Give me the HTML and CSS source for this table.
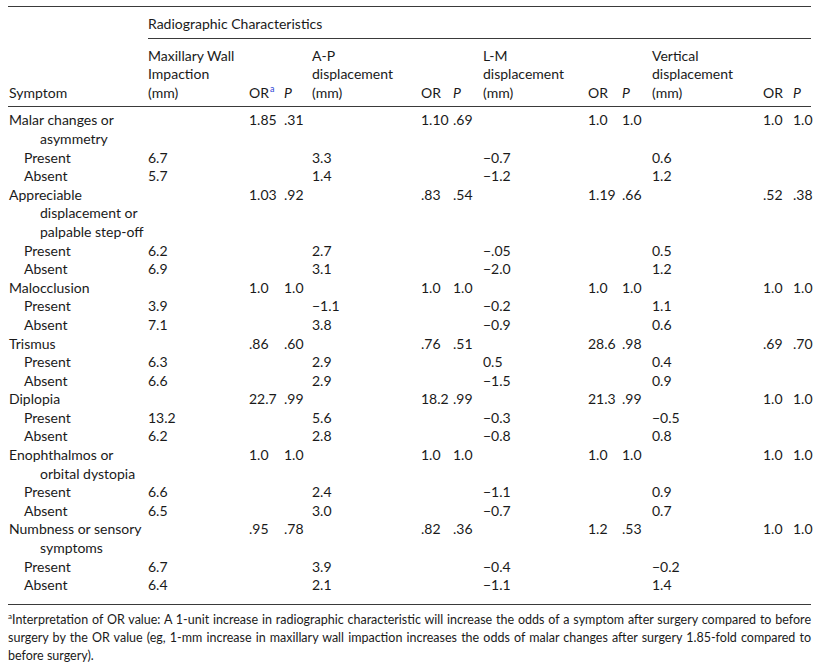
FILE: index.html
```html
<!DOCTYPE html>
<html lang="en">
<head>
<meta charset="utf-8">
<title>Radiographic Characteristics</title>
<link rel="stylesheet" href="styles.css">
</head>
<body>
<table class="data">
  <colgroup>
    <col class="c-sym"><col class="c-val"><col class="c-or"><col class="c-p">
    <col class="c-val2"><col class="c-or2"><col class="c-p2">
    <col class="c-val3"><col class="c-or3"><col class="c-p3">
    <col class="c-val4"><col class="c-or4"><col class="c-p4">
  </colgroup>
  <thead>
    <tr class="h1">
      <th class="blank"></th>
      <th colspan="12" class="group">Radiographic Characteristics</th>
    </tr>
    <tr class="h2">
      <th class="sym">Symptom</th>
      <th>Maxillary Wall<br>Impaction<br>(mm)</th>
      <th>OR<sup class="ref">a</sup></th>
      <th><i>P</i></th>
      <th>A-P<br>displacement<br>(mm)</th>
      <th>OR</th>
      <th><i>P</i></th>
      <th>L-M<br>displacement<br>(mm)</th>
      <th>OR</th>
      <th><i>P</i></th>
      <th>Vertical<br>displacement<br>(mm)</th>
      <th>OR</th>
      <th><i>P</i></th>
    </tr>
  </thead>
  <tbody>
    <tr class="first">
      <td class="sym">Malar changes or<br><span class="cont">asymmetry</span></td>
      <td></td><td>1.85</td><td>.31</td>
      <td></td><td>1.10</td><td>.69</td>
      <td></td><td>1.0</td><td>1.0</td>
      <td></td><td>1.0</td><td>1.0</td>
    </tr>
    <tr><td class="sub">Present</td><td>6.7</td><td></td><td></td><td>3.3</td><td></td><td></td><td>−0.7</td><td></td><td></td><td>0.6</td><td></td><td></td></tr>
    <tr><td class="sub">Absent</td><td>5.7</td><td></td><td></td><td>1.4</td><td></td><td></td><td>−1.2</td><td></td><td></td><td>1.2</td><td></td><td></td></tr>
    <tr>
      <td class="sym">Appreciable<br><span class="cont">displacement or</span><br><span class="cont">palpable step-off</span></td>
      <td></td><td>1.03</td><td>.92</td>
      <td></td><td>.83</td><td>.54</td>
      <td></td><td>1.19</td><td>.66</td>
      <td></td><td>.52</td><td>.38</td>
    </tr>
    <tr><td class="sub">Present</td><td>6.2</td><td></td><td></td><td>2.7</td><td></td><td></td><td>−.05</td><td></td><td></td><td>0.5</td><td></td><td></td></tr>
    <tr><td class="sub">Absent</td><td>6.9</td><td></td><td></td><td>3.1</td><td></td><td></td><td>−2.0</td><td></td><td></td><td>1.2</td><td></td><td></td></tr>
    <tr>
      <td class="sym">Malocclusion</td>
      <td></td><td>1.0</td><td>1.0</td>
      <td></td><td>1.0</td><td>1.0</td>
      <td></td><td>1.0</td><td>1.0</td>
      <td></td><td>1.0</td><td>1.0</td>
    </tr>
    <tr><td class="sub">Present</td><td>3.9</td><td></td><td></td><td>−1.1</td><td></td><td></td><td>−0.2</td><td></td><td></td><td>1.1</td><td></td><td></td></tr>
    <tr><td class="sub">Absent</td><td>7.1</td><td></td><td></td><td>3.8</td><td></td><td></td><td>−0.9</td><td></td><td></td><td>0.6</td><td></td><td></td></tr>
    <tr>
      <td class="sym">Trismus</td>
      <td></td><td>.86</td><td>.60</td>
      <td></td><td>.76</td><td>.51</td>
      <td></td><td>28.6</td><td>.98</td>
      <td></td><td>.69</td><td>.70</td>
    </tr>
    <tr><td class="sub">Present</td><td>6.3</td><td></td><td></td><td>2.9</td><td></td><td></td><td>0.5</td><td></td><td></td><td>0.4</td><td></td><td></td></tr>
    <tr><td class="sub">Absent</td><td>6.6</td><td></td><td></td><td>2.9</td><td></td><td></td><td>−1.5</td><td></td><td></td><td>0.9</td><td></td><td></td></tr>
    <tr>
      <td class="sym">Diplopia</td>
      <td></td><td>22.7</td><td>.99</td>
      <td></td><td>18.2</td><td>.99</td>
      <td></td><td>21.3</td><td>.99</td>
      <td></td><td>1.0</td><td>1.0</td>
    </tr>
    <tr><td class="sub">Present</td><td>13.2</td><td></td><td></td><td>5.6</td><td></td><td></td><td>−0.3</td><td></td><td></td><td>−0.5</td><td></td><td></td></tr>
    <tr><td class="sub">Absent</td><td>6.2</td><td></td><td></td><td>2.8</td><td></td><td></td><td>−0.8</td><td></td><td></td><td>0.8</td><td></td><td></td></tr>
    <tr>
      <td class="sym">Enophthalmos or<br><span class="cont">orbital dystopia</span></td>
      <td></td><td>1.0</td><td>1.0</td>
      <td></td><td>1.0</td><td>1.0</td>
      <td></td><td>1.0</td><td>1.0</td>
      <td></td><td>1.0</td><td>1.0</td>
    </tr>
    <tr><td class="sub">Present</td><td>6.6</td><td></td><td></td><td>2.4</td><td></td><td></td><td>−1.1</td><td></td><td></td><td>0.9</td><td></td><td></td></tr>
    <tr><td class="sub">Absent</td><td>6.5</td><td></td><td></td><td>3.0</td><td></td><td></td><td>−0.7</td><td></td><td></td><td>0.7</td><td></td><td></td></tr>
    <tr>
      <td class="sym">Numbness or sensory<br><span class="cont">symptoms</span></td>
      <td></td><td>.95</td><td>.78</td>
      <td></td><td>.82</td><td>.36</td>
      <td></td><td>1.2</td><td>.53</td>
      <td></td><td>1.0</td><td>1.0</td>
    </tr>
    <tr><td class="sub">Present</td><td>6.7</td><td></td><td></td><td>3.9</td><td></td><td></td><td>−0.4</td><td></td><td></td><td>−0.2</td><td></td><td></td></tr>
    <tr class="last"><td class="sub">Absent</td><td>6.4</td><td></td><td></td><td>2.1</td><td></td><td></td><td>−1.1</td><td></td><td></td><td>1.4</td><td></td><td></td></tr>
  </tbody>
</table>
<p class="note"><span class="line"><sup>a</sup>Interpretation of OR value: A 1-unit increase in radiographic characteristic will increase the odds of a symptom after surgery compared to before</span> <span class="line">surgery by the OR value (eg, 1-mm increase in maxillary wall impaction increases the odds of malar changes after surgery 1.85-fold compared to</span> <span class="line last-line">before surgery).</span></p>
</body>
</html>
```

FILE: styles.css
```css
html, body {
  margin: 0;
  padding: 0;
  background: #ffffff;
}

body {
  padding: 6px 7px 0 8px;
  font-family: Lato, "Open Sans", "DejaVu Sans", sans-serif;
  font-size: 14px;
  color: #1a1a1a;
}

.data {
  width: 803px;
  table-layout: fixed;
  border-collapse: separate;
  border-spacing: 0;
  border-top: 1px solid #3a3a3a;
  line-height: 18.6px;
}

.c-sym { width: 140px; }
.c-val { width: 101px; }
.c-or { width: 35px; }
.c-p { width: 28px; }
.c-val2 { width: 109px; }
.c-or2 { width: 32px; }
.c-p2 { width: 30px; }
.c-val3 { width: 105px; }
.c-or3 { width: 34px; }
.c-p3 { width: 30px; }
.c-val4 { width: 111px; }
.c-or4 { width: 30px; }
.c-p4 { width: 18px; }

th, td {
  padding: 0;
  text-align: left;
  font-weight: normal;
  vertical-align: top;
  white-space: nowrap;
}

.h1 th {
  padding-top: 8px;
  padding-bottom: 4px;
}

.h1 .group {
  border-bottom: 1px solid #3a3a3a;
}

.h2 th {
  vertical-align: bottom;
  padding-top: 8px;
  padding-bottom: 4px;
  border-bottom: 1px solid #3a3a3a;
}

.sym {
  padding-left: 1px;
}

.cont {
  padding-left: 31px;
}

.sub {
  padding-left: 16px;
}

tbody tr.first td {
  padding-top: 4px;
}

tbody tr.last td {
  padding-bottom: 9px;
  border-bottom: 1px solid #3a3a3a;
}

.ref {
  color: #2a3fd6;
  font-size: 9px;
  line-height: 0;
  vertical-align: 6px;
  margin-left: 1px;
}

.note {
  margin: 6px 0 0 0;
  width: 803px;
  font-size: 12.5px;
  line-height: 18px;
}

.note .line {
  display: block;
  text-align: justify;
  text-align-last: justify;
  white-space: nowrap;
}

.note .line.last-line {
  text-align-last: left;
}

.note sup {
  font-size: 8px;
  line-height: 0;
  vertical-align: 5px;
}
```
